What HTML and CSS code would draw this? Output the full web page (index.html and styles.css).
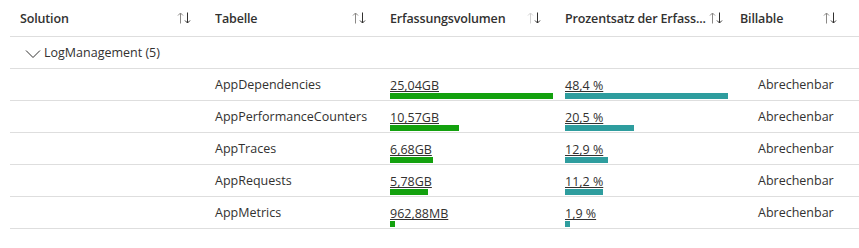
FILE: index.html
```html
<!DOCTYPE html>
<html lang="de">
<head>
<meta charset="utf-8">
<link rel="stylesheet" href="styles.css">
</head>
<body>
<div class="table">
  <div class="row header">
    <div class="hcell"><span class="label">Solution</span><svg class="sort" width="14" height="12" viewBox="0 0 14 12"><path d="M3.5 11.5V1M1 3.5L3.5 1L6 3.5" class="up"/><path d="M10.5 0.5V11M8 8.5L10.5 11L13 8.5" class="down"/></svg></div>
    <div class="hcell"><span class="label">Tabelle</span><svg class="sort" width="14" height="12" viewBox="0 0 14 12"><path d="M3.5 11.5V1M1 3.5L3.5 1L6 3.5" class="up"/><path d="M10.5 0.5V11M8 8.5L10.5 11L13 8.5" class="down"/></svg></div>
    <div class="hcell"><span class="label">Erfassungsvolumen</span><svg class="sort" width="14" height="12" viewBox="0 0 14 12"><path d="M3.5 11.5V1M1 3.5L3.5 1L6 3.5" class="up faint"/><path d="M10.5 0.5V11M8 8.5L10.5 11L13 8.5" class="down"/></svg></div>
    <div class="hcell tight"><span class="label" title="Prozentsatz der Erfassungsvolumen">Prozentsatz der Erfass...</span><svg class="sort" width="14" height="12" viewBox="0 0 14 12"><path d="M3.5 11.5V1M1 3.5L3.5 1L6 3.5" class="up"/><path d="M10.5 0.5V11M8 8.5L10.5 11L13 8.5" class="down"/></svg></div>
    <div class="hcell last"><span class="label">Billable</span><svg class="sort" width="14" height="12" viewBox="0 0 14 12"><path d="M3.5 11.5V1M1 3.5L3.5 1L6 3.5" class="up"/><path d="M10.5 0.5V11M8 8.5L10.5 11L13 8.5" class="down"/></svg></div>
  </div>

  <div class="group">
    <svg class="chev" width="16" height="10" viewBox="0 0 16 10"><path d="M1 1.5L8 8.5L15 1.5"/></svg>
    <span>LogManagement (5)</span>
  </div>

  <div class="row data">
    <div class="cell"></div>
    <div class="cell name">AppDependencies</div>
    <div class="cell metric"><span class="val">25,04GB</span><div class="bar green" style="width:163px"></div></div>
    <div class="cell metric"><span class="val">48,4 %</span><div class="bar teal" style="width:163px"></div></div>
    <div class="cell bill">Abrechenbar</div>
  </div>
  <div class="row data">
    <div class="cell"></div>
    <div class="cell name">AppPerformanceCounters</div>
    <div class="cell metric"><span class="val">10,57GB</span><div class="bar green" style="width:69px"></div></div>
    <div class="cell metric"><span class="val">20,5 %</span><div class="bar teal" style="width:69px"></div></div>
    <div class="cell bill">Abrechenbar</div>
  </div>
  <div class="row data">
    <div class="cell"></div>
    <div class="cell name">AppTraces</div>
    <div class="cell metric"><span class="val">6,68GB</span><div class="bar green" style="width:43px"></div></div>
    <div class="cell metric"><span class="val">12,9 %</span><div class="bar teal" style="width:43px"></div></div>
    <div class="cell bill">Abrechenbar</div>
  </div>
  <div class="row data">
    <div class="cell"></div>
    <div class="cell name">AppRequests</div>
    <div class="cell metric"><span class="val">5,78GB</span><div class="bar green" style="width:38px"></div></div>
    <div class="cell metric"><span class="val">11,2 %</span><div class="bar teal" style="width:38px"></div></div>
    <div class="cell bill">Abrechenbar</div>
  </div>
  <div class="row data">
    <div class="cell"></div>
    <div class="cell name">AppMetrics</div>
    <div class="cell metric"><span class="val">962,88MB</span><div class="bar green" style="width:5px"></div></div>
    <div class="cell metric"><span class="val">1,9 %</span><div class="bar teal" style="width:5px"></div></div>
    <div class="cell bill">Abrechenbar</div>
  </div>
</div>
</body>
</html>
```

FILE: styles.css
```css
* { box-sizing: border-box; }
html, body { margin: 0; padding: 0; background: #fff; }
body {
  font-family: "Open Sans", "Noto Sans", sans-serif;
  font-size: 12.5px;
  color: #323130;
}
.table {
  margin-left: 10px;
}
.row {
  display: grid;
  grid-template-columns: 195px 175px 175px 175px 1fr;
  border-bottom: 1px solid #dedede;
}
.header { height: 37px; align-items: center; }
.hcell {
  display: flex;
  align-items: center;
  padding: 0 14px 0 10px;
  font-weight: 600;
  color: #323130;
  min-width: 0;
}
.hcell.tight { padding-right: 9px; }
.hcell.last { padding-right: 22px; }
.label {
  flex: 1;
  min-width: 0;
  white-space: nowrap;
  overflow: hidden;
  letter-spacing: -0.15px;
}
.tight .label { flex: none; margin-right: 1px; }
.sort { flex: none; margin-left: 2px; }
.sort path { fill: none; stroke-width: 1; }
.sort .up { stroke: #8a8886; }
.sort .up.faint { stroke: #d2d2d2; }
.sort .down { stroke: #323130; }

.group {
  height: 32px;
  display: flex;
  align-items: center;
  padding-left: 15px;
  border-bottom: 1px solid #dedede;
}
.chev { margin-right: 3px; margin-top: 2px; }
.chev path { fill: none; stroke: #323130; stroke-width: 1; }

.data { height: 32px; }
.cell {
  padding: 0 10px;
  display: flex;
  align-items: center;
  white-space: nowrap;
}
.metric {
  flex-direction: column;
  align-items: flex-start;
  justify-content: flex-start;
  padding-top: 9px;
}
.val {
  line-height: 15px;
  text-decoration: underline;
  text-decoration-skip-ink: none;
  text-underline-offset: 1px;
}
.bar { height: 6px; }
.green { background: #13a10e; }
.teal { background: #2e9d9e; }
.bill { padding-left: 28px; }
```
